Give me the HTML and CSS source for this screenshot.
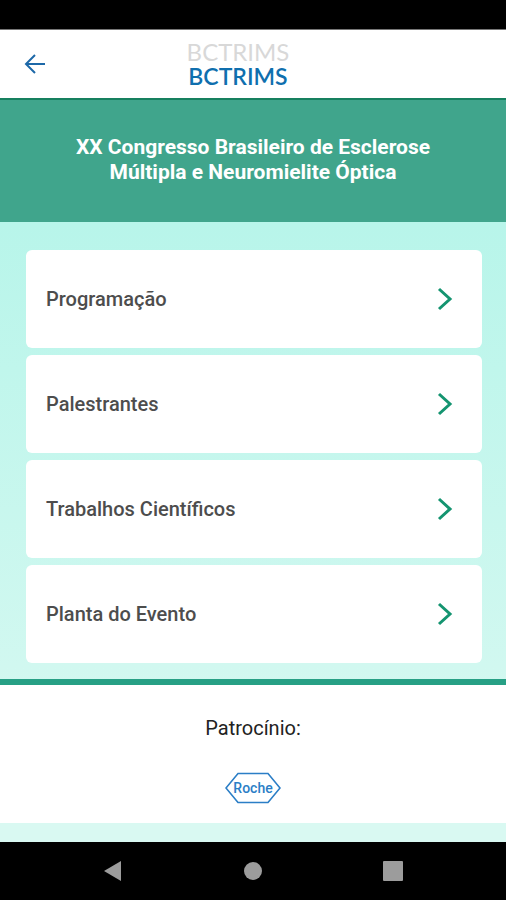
FILE: index.html
```
<!DOCTYPE html>
<html lang="pt-br">
<head>
  <meta charset="UTF-8">
  <meta name="viewport" content="width=device-width, initial-scale=1">
  <title>BCTRIMS</title>
  <link rel="stylesheet" href="styles.css">
</head>
<body>
  <div class="status-bar"></div>

  <header class="topo">
    <button class="voltar" type="button" aria-label="Voltar">
      <svg width="22" height="22" viewBox="0 0 22 22" fill="none" stroke="#1d68a8" stroke-width="2">
        <path d="M21 11H3M11 2L2 11l9 9"/>
      </svg>
    </button>
    <div class="logo">
      <span class="logo-sombra" aria-hidden="true">BCTRIMS</span>
      <span class="logo-texto">BCTRIMS</span>
    </div>
  </header>

  <div class="titulo">
    <h1>XX Congresso Brasileiro de Esclerose Múltipla e Neuromielite Óptica</h1>
  </div>

  <nav class="menu">
    <a class="item" href="#programacao">
      Programação
      <svg class="seta" viewBox="0 0 16 24"><path d="M2 2l11 10L2 22"/></svg>
    </a>
    <a class="item" href="#palestrantes">
      Palestrantes
      <svg class="seta" viewBox="0 0 16 24"><path d="M2 2l11 10L2 22"/></svg>
    </a>
    <a class="item" href="#trabalhos">
      Trabalhos Científicos
      <svg class="seta" viewBox="0 0 16 24"><path d="M2 2l11 10L2 22"/></svg>
    </a>
    <a class="item" href="#planta">
      Planta do Evento
      <svg class="seta" viewBox="0 0 16 24"><path d="M2 2l11 10L2 22"/></svg>
    </a>
  </nav>

  <footer class="patrocinio">
    <p>Patrocínio:</p>
    <svg class="roche" width="56" height="32" viewBox="0 0 56 32" role="img" aria-label="Roche">
      <path d="M13 1.500H43L55 16 43 30.500H13L1 16z" fill="#fff" stroke="#2b7ec6" stroke-width="1.600"/>
      <text x="28" y="21" text-anchor="middle">Roche</text>
    </svg>
  </footer>

  <div class="barra-sistema">
    <button type="button" aria-label="Voltar">
      <svg width="20" height="22" viewBox="0 0 20 22"><path d="M1 11L18 1v20z"/></svg>
    </button>
    <button type="button" aria-label="Início">
      <svg width="20" height="22" viewBox="0 0 20 22"><circle cx="10" cy="11" r="9"/></svg>
    </button>
    <button type="button" aria-label="Recentes">
      <svg width="20" height="22" viewBox="0 0 20 22"><rect y="1" width="20" height="20" rx="1"/></svg>
    </button>
  </div>
</body>
</html>
```
FILE: styles.css
```
* {
  box-sizing: border-box;
}
body {
  margin: 0;
  min-height: 100vh;
  display: flex;
  flex-direction: column;
  font-family: Roboto, sans-serif;
  background: linear-gradient(#b8f5ea 25%, #d9f9f2 90%);
}
button {
  padding: 0;
  border: none;
  background: none;
  cursor: pointer;
}
svg {
  display: block;
}
.status-bar {
  height: 30px;
  background: #000;
  border-bottom: 1px solid #777;
}
.topo {
  display: grid;
  grid-template-columns: 1fr auto 1fr;
  align-items: center;
  height: 68px;
  padding: 0 54px 0 24px;
  background: #fff;
}
.voltar {
  justify-self: start;
}
.logo {
  display: flex;
  flex-direction: column;
  align-items: center;
  font-family: Lato, sans-serif;
}
.logo-sombra {
  color: #d8d8d8;
  font-size: 24px;
  line-height: 24px;
}
.logo-texto {
  color: #0f6fae;
  font-size: 23px;
  font-weight: 600;
  line-height: 24px;
}
.titulo {
  padding: 35px 60px 37px;
  border-top: 2px solid #16805f;
  background: #40a58c;
}
.titulo h1 {
  margin: 0;
  color: #fff;
  font-size: 21px;
  font-weight: 700;
  line-height: 25px;
  text-align: center;
}
.menu {
  display: flex;
  flex-direction: column;
  gap: 7px;
  padding: 28px 24px 16px 26px;
}
.item {
  display: flex;
  align-items: center;
  justify-content: space-between;
  padding: 37px 29px 37px 20px;
  border-radius: 6px;
  background: #fff;
  color: #4d4d4d;
  font-size: 20px;
  font-weight: 500;
  line-height: 24px;
  text-decoration: none;
}
.seta {
  width: 16px;
  height: 24px;
  fill: none;
  stroke: #149470;
  stroke-width: 3;
}
.patrocinio {
  display: flex;
  flex-direction: column;
  align-items: center;
  gap: 32px;
  padding: 31px 0 19px;
  border-top: 6px solid #27a085;
  background: #fff;
}
.patrocinio p {
  margin: 0;
  color: #222;
  font-size: 20px;
  line-height: 24px;
}
.roche text {
  fill: #2b7ec6;
  font-family: Roboto, sans-serif;
  font-size: 14px;
  font-weight: 500;
}
.barra-sistema {
  display: grid;
  grid-template-columns: repeat(3, 1fr);
  align-items: center;
  justify-items: center;
  height: 58px;
  margin-top: auto;
  padding: 0 43px;
  background: #000;
}
.barra-sistema svg {
  fill: #9c9c9c;
}
```
